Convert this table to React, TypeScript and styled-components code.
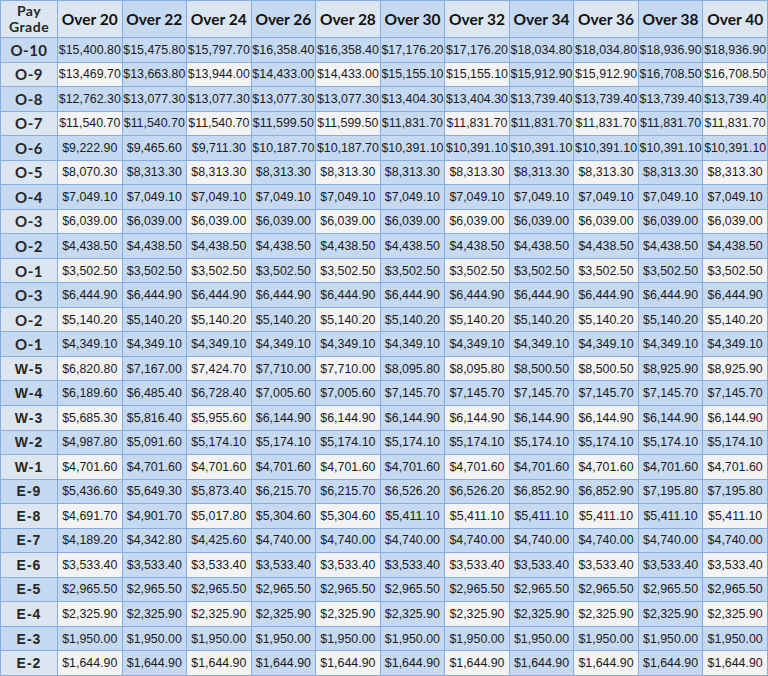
import styled, { createGlobalStyle } from "styled-components";

const GlobalStyle = createGlobalStyle`
  html, body {
    margin: 0;
    padding: 0;
    background: #ffffff;
  }
`;

const YEARS = [20, 22, 24, 26, 28, 30, 32, 34, 36, 38, 40];

// pads a row out to 11 columns by repeating its last value
function fill(values: string[]): string[] {
  const out = [...values];
  while (out.length < YEARS.length) out.push(values[values.length - 1]);
  return out;
}

type Row = { grade: string; pay: string[]; plain?: boolean };

const rows: Row[] = [
  { grade: "O-10", pay: fill(["15,400.80", "15,475.80", "15,797.70", "16,358.40", "16,358.40", "17,176.20", "17,176.20", "18,034.80", "18,034.80", "18,936.90"]) },
  { grade: "O-9", pay: fill(["13,469.70", "13,663.80", "13,944.00", "14,433.00", "14,433.00", "15,155.10", "15,155.10", "15,912.90", "15,912.90", "16,708.50"]) },
  { grade: "O-8", pay: fill(["12,762.30", "13,077.30", "13,077.30", "13,077.30", "13,077.30", "13,404.30", "13,404.30", "13,739.40"]) },
  { grade: "O-7", pay: fill(["11,540.70", "11,540.70", "11,540.70", "11,599.50", "11,599.50", "11,831.70"]) },
  { grade: "O-6", pay: fill(["9,222.90", "9,465.60", "9,711.30", "10,187.70", "10,187.70", "10,391.10"]) },
  { grade: "O-5", pay: fill(["8,070.30", "8,313.30"]) },
  { grade: "O-4", pay: fill(["7,049.10"]) },
  { grade: "O-3", pay: fill(["6,039.00"]) },
  { grade: "O-2", pay: fill(["4,438.50"]) },
  { grade: "O-1", pay: fill(["3,502.50"]) },
  { grade: "O-3", pay: fill(["6,444.90"]) },
  { grade: "O-2", pay: fill(["5,140.20"]) },
  { grade: "O-1", pay: fill(["4,349.10"]) },
  { grade: "W-5", plain: true, pay: fill(["6,820.80", "7,167.00", "7,424.70", "7,710.00", "7,710.00", "8,095.80", "8,095.80", "8,500.50", "8,500.50", "8,925.90"]) },
  { grade: "W-4", plain: true, pay: fill(["6,189.60", "6,485.40", "6,728.40", "7,005.60", "7,005.60", "7,145.70"]) },
  { grade: "W-3", plain: true, pay: fill(["5,685.30", "5,816.40", "5,955.60", "6,144.90"]) },
  { grade: "W-2", plain: true, pay: fill(["4,987.80", "5,091.60", "5,174.10"]) },
  { grade: "W-1", plain: true, pay: fill(["4,701.60"]) },
  { grade: "E-9", plain: true, pay: fill(["5,436.60", "5,649.30", "5,873.40", "6,215.70", "6,215.70", "6,526.20", "6,526.20", "6,852.90", "6,852.90", "7,195.80"]) },
  { grade: "E-8", plain: true, pay: fill(["4,691.70", "4,901.70", "5,017.80", "5,304.60", "5,304.60", "5,411.10"]) },
  { grade: "E-7", plain: true, pay: fill(["4,189.20", "4,342.80", "4,425.60", "4,740.00"]) },
  { grade: "E-6", plain: true, pay: fill(["3,533.40"]) },
  { grade: "E-5", plain: true, pay: fill(["2,965.50"]) },
  { grade: "E-4", plain: true, pay: fill(["2,325.90"]) },
  { grade: "E-3", plain: true, pay: fill(["1,950.00"]) },
  { grade: "E-2", plain: true, pay: fill(["1,644.90"]) },
];

const BLUE = "#c5d9f1";
const PALE = "#dce6f1";
const WHITE = "#f3f3f3";
const LINE = "#86ade0";

function App() {
  return (
    <>
      <GlobalStyle />
      <S.Table>
        <colgroup>
          <S.GradeCol />
          {YEARS.map((y) => (
            <col key={y} />
          ))}
        </colgroup>
        <thead>
          <S.HeadRow>
            <S.GradeHead>
              <S.HeadLine>Pay</S.HeadLine>
              <S.HeadLine>Grade</S.HeadLine>
            </S.GradeHead>
            {YEARS.map((y, i) => (
              <S.YearHead key={y} $shade={i % 2 === 1}>
                Over {y}
              </S.YearHead>
            ))}
          </S.HeadRow>
        </thead>
        <tbody>
          {rows.map((row, r) => (
            <S.BodyRow key={r}>
              <S.Grade $shade={r % 2 === 0} $plain={row.plain}>
                {row.grade}
              </S.Grade>
              {row.pay.map((p, c) => (
                <S.Pay key={c} $shade={r % 2 === 0 || c % 2 === 1}>
                  ${p}
                </S.Pay>
              ))}
            </S.BodyRow>
          ))}
        </tbody>
      </S.Table>
    </>
  );
}

export default App;

const S = {
  Table: styled.table`
    width: 768px;
    height: 676px;
    table-layout: fixed;
    border-collapse: collapse;
    border: 1px solid ${LINE};
  `,

  GradeCol: styled.col`
    width: 57px;
  `,

  HeadRow: styled.tr`
    height: 37px;
  `,

  BodyRow: styled.tr`
    height: 24.5px;
  `,

  GradeHead: styled.th`
    padding: 0;
    border: 1px solid ${LINE};
    background: ${PALE};
    color: #262626;
    font-family: Lato, "Open Sans", sans-serif;
    font-size: 14px;
    font-weight: 700;
    letter-spacing: 0.5px;
    text-align: center;
  `,

  HeadLine: styled.div`
    line-height: 16px;
  `,

  YearHead: styled.th<{ $shade: boolean }>`
    padding: 0;
    border: 1px solid ${LINE};
    background: ${({ $shade }) => ($shade ? BLUE : PALE)};
    color: #111;
    font-family: Lato, "Open Sans", sans-serif;
    font-size: 15.5px;
    font-weight: 700;
    white-space: nowrap;
    text-align: center;
  `,

  Grade: styled.td<{ $shade: boolean; $plain?: boolean }>`
    padding: 0;
    border: 1px solid ${LINE};
    background: ${({ $shade }) => ($shade ? BLUE : PALE)};
    color: #262626;
    font-family: ${({ $plain }) =>
      $plain ? `"Liberation Sans", Arial, sans-serif` : `Lato, "Open Sans", sans-serif`};
    font-size: ${({ $plain }) => ($plain ? "14px" : "15px")};
    letter-spacing: ${({ $plain }) => ($plain ? "1px" : "0.5px")};
    font-weight: 700;
    text-align: center;
    white-space: nowrap;
  `,

  Pay: styled.td<{ $shade: boolean }>`
    padding: 0;
    border: 1px solid ${LINE};
    background: ${({ $shade }) => ($shade ? BLUE : WHITE)};
    color: #1a1a1a;
    font-family: "Liberation Sans", Arial, sans-serif;
    font-size: 12.4px;
    text-align: center;
    white-space: nowrap;
    overflow: hidden;
  `,
};
